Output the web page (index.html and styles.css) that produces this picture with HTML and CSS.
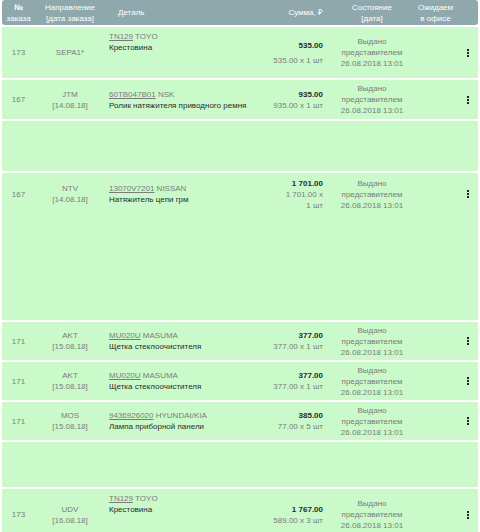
FILE: index.html
```html
<!DOCTYPE html>
<html lang="ru">
<head>
<meta charset="utf-8">
<title>Заказы</title>
<link rel="stylesheet" href="styles.css">
</head>
<body>
<div class="table">
  <div class="grid head">
    <div class="c-num"><b>№</b><br>заказа</div>
    <div class="c-dir">Направление<br>[дата заказа]</div>
    <div class="c-det">Деталь</div>
    <div class="c-sum">Сумма, ₽</div>
    <div class="c-st">Состояние<br>[дата]</div>
    <div class="c-off">Ожидаем<br>в офисе</div>
    <div class="c-act"></div>
  </div>

  <div class="item">
    <div class="grid r-tall">
      <div class="c-num">173</div>
      <div class="c-dir">SEPA1*</div>
      <div class="c-det"><a class="art">TN129</a> TOYO<br><span class="name">Крестовина</span><br>&nbsp;<br>&nbsp;</div>
      <div class="c-sum"><div class="sum sum-gap">535.00</div>535.00 x 1&nbsp;шт</div>
      <div class="c-st">Выдано<br>представителем<br>26.08.2018 13:01</div>
      <div class="c-off"></div>
      <div class="c-act"><span class="dots"></span></div>
    </div>
  </div>

  <div class="item">
    <div class="grid r-39">
      <div class="c-num">167</div>
      <div class="c-dir">JTM<br>[14.08.18]</div>
      <div class="c-det"><a class="art">60TB047B01</a> NSK<br><span class="name">Ролик натяжителя приводного ремня</span></div>
      <div class="c-sum"><div class="sum">935.00</div>935.00 x 1&nbsp;шт</div>
      <div class="c-st">Выдано<br>представителем<br>26.08.2018 13:01</div>
      <div class="c-off"></div>
      <div class="c-act"><span class="dots"></span></div>
    </div>
  </div>

  <div class="item gap-50"></div>

  <div class="item">
    <div class="grid r-42">
      <div class="c-num">167</div>
      <div class="c-dir">NTV<br>[14.08.18]</div>
      <div class="c-det"><a class="art">13070V7201</a> NISSAN<br><span class="name">Натяжитель цепи грм</span></div>
      <div class="c-sum"><div class="sum">1 701.00</div>1 701.00 x 1&nbsp;шт</div>
      <div class="c-st">Выдано<br>представителем<br>26.08.2018 13:01</div>
      <div class="c-off"></div>
      <div class="c-act"><span class="dots"></span></div>
    </div>
    <div class="filler"></div>
  </div>

  <div class="item">
    <div class="grid r-38">
      <div class="c-num">171</div>
      <div class="c-dir">AKT<br>[15.08.18]</div>
      <div class="c-det"><a class="art">MU020U</a> MASUMA<br><span class="name">Щетка стеклоочистителя</span></div>
      <div class="c-sum"><div class="sum">377.00</div>377.00 x 1&nbsp;шт</div>
      <div class="c-st">Выдано<br>представителем<br>26.08.2018 13:01</div>
      <div class="c-off"></div>
      <div class="c-act"><span class="dots"></span></div>
    </div>
  </div>

  <div class="item">
    <div class="grid r-38">
      <div class="c-num">171</div>
      <div class="c-dir">AKT<br>[15.08.18]</div>
      <div class="c-det"><a class="art">MU020U</a> MASUMA<br><span class="name">Щетка стеклоочистителя</span></div>
      <div class="c-sum"><div class="sum">377.00</div>377.00 x 1&nbsp;шт</div>
      <div class="c-st">Выдано<br>представителем<br>26.08.2018 13:01</div>
      <div class="c-off"></div>
      <div class="c-act"><span class="dots"></span></div>
    </div>
  </div>

  <div class="item">
    <div class="grid r-38">
      <div class="c-num">171</div>
      <div class="c-dir">MOS<br>[15.08.18]</div>
      <div class="c-det"><a class="art">9436926020</a> HYUNDAI/KIA<br><span class="name">Лампа приборной панели</span></div>
      <div class="c-sum"><div class="sum">385.00</div>77.00 x 5&nbsp;шт</div>
      <div class="c-st">Выдано<br>представителем<br>26.08.2018 13:01</div>
      <div class="c-off"></div>
      <div class="c-act"><span class="dots"></span></div>
    </div>
  </div>

  <div class="item gap-45"></div>

  <div class="item">
    <div class="grid r-tall">
      <div class="c-num">173</div>
      <div class="c-dir">UDV<br>[16.08.18]</div>
      <div class="c-det"><a class="art">TN129</a> TOYO<br><span class="name">Крестовина</span><br>&nbsp;<br>&nbsp;</div>
      <div class="c-sum"><div class="sum">1 767.00</div>589.00 x 3&nbsp;шт</div>
      <div class="c-st">Выдано<br>представителем<br>26.08.2018 13:01</div>
      <div class="c-off"></div>
      <div class="c-act"><span class="dots"></span></div>
    </div>
  </div>
</div>
</body>
</html>
```

FILE: styles.css
```css
html, body {
  margin: 0;
  padding: 0;
  background: #ffffff;
}

body {
  font-family: "Liberation Sans", Arial, sans-serif;
  font-size: 8px;
  line-height: 11px;
  color: #7b7b7b;
}

.table {
  margin: 0 2px;
}

.grid {
  display: grid;
  grid-template-columns: 33px 70px 158px 68px 82px 45px 20px;
  align-items: center;
}

.head {
  height: 25px;
  background: #8fa8ac;
  color: #ffffff;
  border-radius: 3px;
  margin-bottom: 2px;
}

.head b {
  font-weight: bold;
}

.item {
  background: #cafaca;
  margin-bottom: 2px;
}

.r-tall { height: 51px; }
.r-39 { height: 39px; }
.r-42 { height: 42px; }
.r-38 { height: 38px; }

.filler { height: 105px; }
.gap-50 { height: 50px; }
.gap-45 { height: 45px; }

.c-num,
.c-dir,
.c-st,
.c-off,
.c-act {
  text-align: center;
}

.c-det {
  padding-left: 4px;
  white-space: nowrap;
}

.head .c-det {
  padding-left: 13px;
}

.c-sum {
  text-align: right;
  padding: 0 8px;
}

.sum {
  color: #2a2a2a;
  font-weight: bold;
}

.sum-gap {
  margin-bottom: 4px;
}

.name {
  color: #2a2a2a;
}

.art {
  color: #7b7b7b;
  text-decoration: underline;
}

.dots {
  display: inline-block;
  width: 2px;
  height: 2px;
  background: #222222;
  box-shadow: 0 -3px 0 #222222, 0 3px 0 #222222;
  vertical-align: middle;
}
```
